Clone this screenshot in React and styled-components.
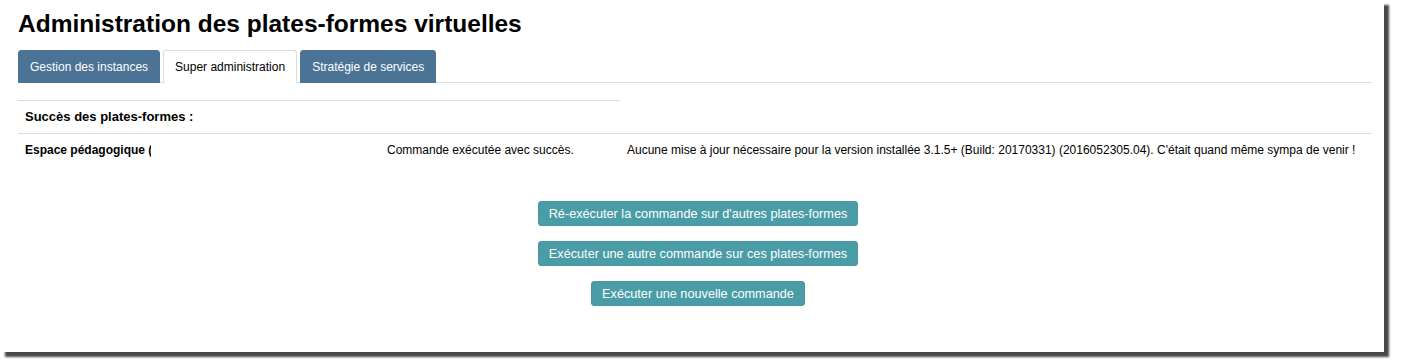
import React from "react";
import styled, { createGlobalStyle } from "styled-components";

const GlobalStyle = createGlobalStyle`
  html, body {
    margin: 0;
    padding: 0;
    background: #ffffff;
  }
  body {
    font-family: Arial, "Liberation Sans", Helvetica, sans-serif;
    color: #000;
  }
`;

const Page = styled.div`
  height: 360px;
`;

const Frame = styled.div`
  width: 1384px;
  height: 352px;
  background: #ffffff;
  box-shadow: 5px 5px 2px rgba(40, 40, 40, 0.85);
  box-sizing: border-box;
  padding: 0 12px 0 18px;
  overflow: hidden;
`;

const Title = styled.h2`
  margin: 0;
  padding-top: 10px;
  font-size: 24.5px;
  line-height: 28px;
  font-weight: bold;
  color: #000;
`;

const TabBar = styled.div`
  display: flex;
  gap: 3px;
  margin-top: 12px;
  border-bottom: 1px solid #dddddd;
  height: 33px;
  box-sizing: border-box;
`;

const Tab = styled.div`
  box-sizing: border-box;
  padding: 0 11px;
  display: flex;
  align-items: center;
  font-size: 12px;
  border-radius: 3px 3px 0 0;
  background: ${(p) => (p.$active ? "#ffffff" : "#4b7395")};
  color: ${(p) => (p.$active ? "#000000" : "#ffffff")};
  border: 1px solid ${(p) => (p.$active ? "#dddddd" : "#4b7395")};
  border-bottom-color: ${(p) => (p.$active ? "#ffffff" : "#4b7395")};
  margin-bottom: ${(p) => (p.$active ? "-1px" : "0")};
  height: ${(p) => (p.$active ? "34px" : "33px")};
`;

const Results = styled.div`
  margin-top: 17px;
`;

const Caption = styled.div`
  width: 602px;
  border-top: 1px solid #dddddd;
  padding: 7px 7px 0;
  height: 33px;
  box-sizing: border-box;
  font-size: 13px;
  font-weight: bold;
  line-height: 17px;
`;

const Row = styled.div`
  display: grid;
  grid-template-columns: 362px 240px 1fr;
  border-top: 1px solid #dddddd;
  padding: 8px 7px;
  font-size: 12px;
  line-height: 16px;
`;

const Cell = styled.div`
  white-space: nowrap;
  overflow: hidden;
  font-weight: ${(p) => (p.$bold ? "bold" : "normal")};
  max-width: ${(p) => (p.$bold ? "126px" : "none")};
`;

const Actions = styled.div`
  display: flex;
  flex-direction: column;
  align-items: center;
  gap: 15px;
  margin-top: 35px;
  padding-left: 6px;
`;

const Button = styled.button`
  background: #4a9ca6;
  color: #ffffff;
  border: 1px solid #4a96a0;
  border-radius: 3px;
  height: 25px;
  padding: 0 10px;
  font-family: Arial, "Liberation Sans", Helvetica, sans-serif;
  font-size: 12.7px;
  cursor: pointer;
`;

const tabs = [
  { label: "Gestion des instances" },
  { label: "Super administration", active: true },
  { label: "Stratégie de services" },
];

const actions = [
  "Ré-exécuter la commande sur d'autres plates-formes",
  "Exécuter une autre commande sur ces plates-formes",
  "Exécuter une nouvelle commande",
];

const App = () => (
  <Page>
    <GlobalStyle />
    <Frame>
      <Title>Administration des plates-formes virtuelles</Title>
      <TabBar>
        {tabs.map((t) => (
          <Tab key={t.label} $active={t.active}>
            {t.label}
          </Tab>
        ))}
      </TabBar>
      <Results>
        <Caption>Succès des plates-formes :</Caption>
        <Row>
          <Cell $bold>Espace pédagogique (collège)</Cell>
          <Cell>Commande exécutée avec succès.</Cell>
          <Cell>
            Aucune mise à jour nécessaire pour la version installée 3.1.5+
            (Build: 20170331) (2016052305.04). C'était quand même sympa de
            venir !
          </Cell>
        </Row>
      </Results>
      <Actions>
        {actions.map((a) => (
          <Button key={a}>{a}</Button>
        ))}
      </Actions>
    </Frame>
  </Page>
);

export default App;
